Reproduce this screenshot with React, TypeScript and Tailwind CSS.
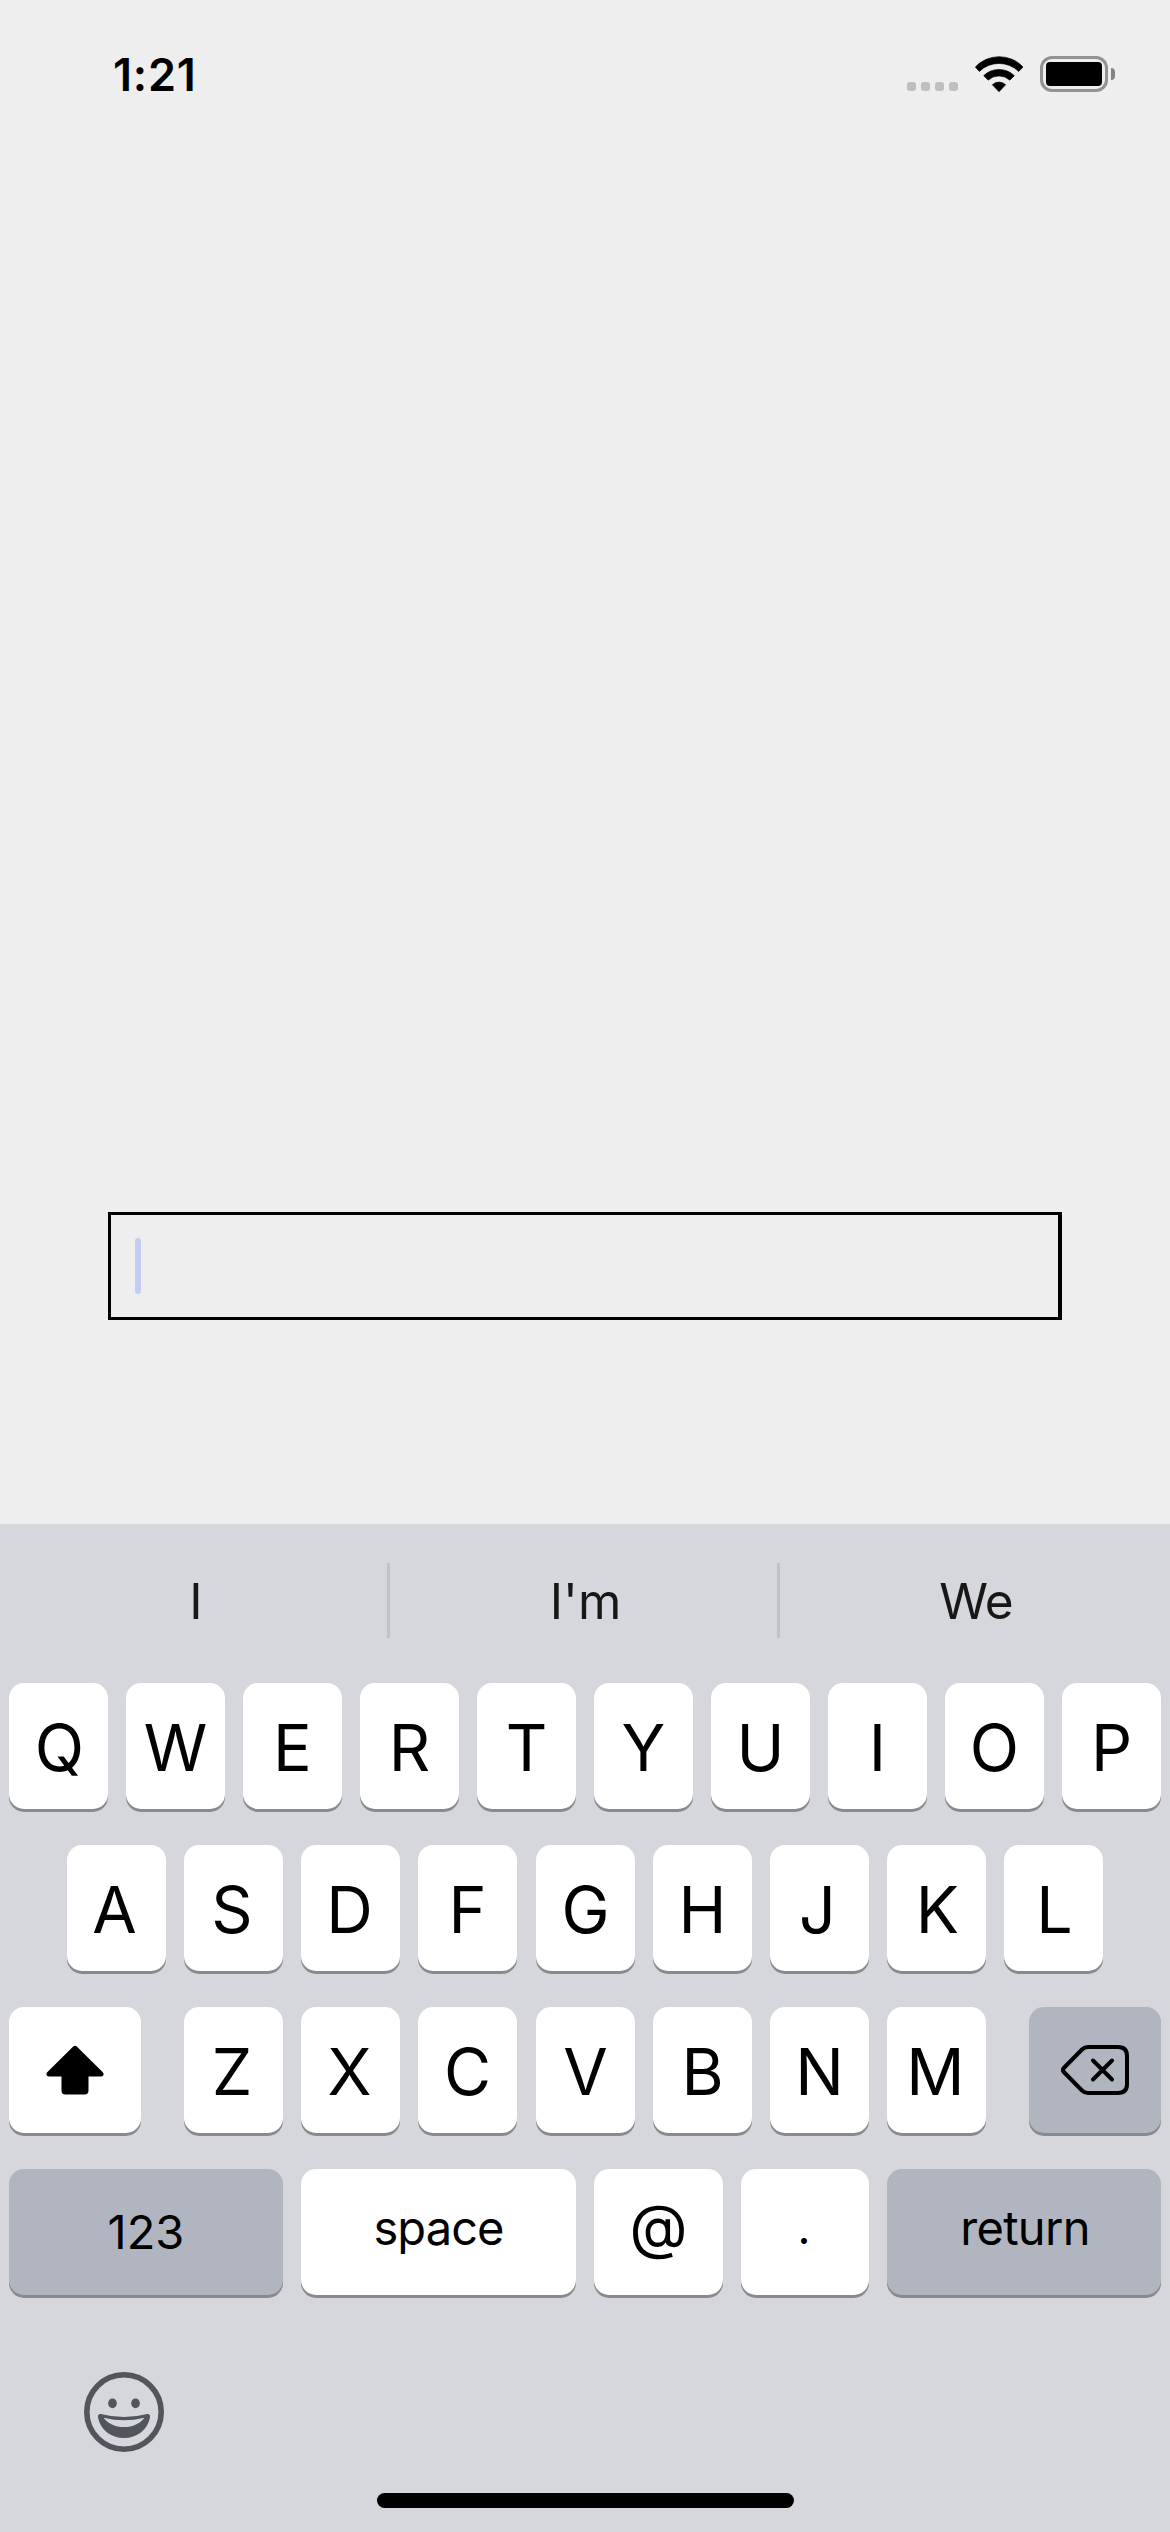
import type { ReactNode } from "react";

const ROW_1 = ["Q", "W", "E", "R", "T", "Y", "U", "I", "O", "P"];
const ROW_2 = ["A", "S", "D", "F", "G", "H", "J", "K", "L"];
const ROW_3 = ["Z", "X", "C", "V", "B", "N", "M"];

// Optical nudges for individual letters inside their key caps.
const NUDGE: Record<string, string> = {
  A: "pr-1",
  S: "pr-[3px]",
  D: "pr-0.5",
  J: "pr-1",
  Z: "pr-[3px]",
  X: "pr-0.5",
  Q: "pl-0.5",
  K: "pl-0.5",
  L: "pl-0.5",
  M: "pr-0.5",
};

function Key({ className, children }: { className: string; children: ReactNode }) {
  return (
    <button
      type="button"
      className={`flex h-[126px] shrink-0 items-center justify-center rounded-[15px] leading-none text-black shadow-[0_3px_0_#898a8d] ${className}`}
    >
      {children}
    </button>
  );
}

function LetterKeys({ letters }: { letters: string[] }) {
  return (
    <div className="flex gap-[18px]">
      {letters.map((l) => (
        <Key
          key={l}
          className={`w-[99px] bg-white pt-[5px] text-[64.5px] ${l === "G" || l === "V" ? "ml-px" : ""} ${NUDGE[l] ?? ""}`}
        >
          {l}
        </Key>
      ))}
    </div>
  );
}

function StatusBar() {
  return (
    <header className="flex h-[150px] items-start justify-between pr-[55px] pl-[113px]">
      <div className="mt-[52px] text-[45px] leading-[45px] font-semibold tracking-[0.8px] text-black">1:21</div>
      <div className="mt-[55px] flex items-start">
        <div className="mt-[27px] flex gap-[5px]">
          {[0, 1, 2, 3].map((i) => (
            <span key={i} className="size-[9px] rounded-[3px] bg-[#bfbfbf]" />
          ))}
        </div>
        <svg
          className="ml-4 h-[38px] w-[50px]"
          viewBox="282 72 150 114"
          fill="#000"
          stroke="#000"
          strokeWidth="2"
          strokeLinejoin="round"
        >
          <path d="M286 108A98 98 0 0 1 429 108L416 121.500A84 84 0 0 0 298 121.500Z" />
          <path d="M311 134A66 66 0 0 1 403 134L389.500 147.500A48 48 0 0 0 324.500 147.500Z" />
          <path d="M337 161A30 30 0 0 1 377 161L357 182Z" />
        </svg>
        <div className="mt-px ml-4 flex h-9 w-[68px] items-center justify-center rounded-[12px] border-3 border-[#929292]">
          <div className="h-6 w-14 rounded-[4px] bg-black" />
        </div>
        <div className="mt-[13px] ml-[3px] h-3 w-1 rounded-r-full bg-[#838383]" />
      </div>
    </header>
  );
}

export default function App() {
  return (
    <div className="flex h-[2532px] w-[1170px] flex-col overflow-hidden bg-[#eeeeee] font-['Inter',sans-serif]">
      <StatusBar />
      <main className="flex-1 px-[108px] pt-[1062px]">
        <div className="flex h-[108px] items-start border-3 border-r-4 border-black pt-[23px] pl-6">
          <span className="h-14 w-1.5 rounded-full bg-[#c3cdf1]" />
        </div>
      </main>
      <section className="h-[1008px] bg-[#d6d7dc] px-[9px] pt-[39px]">
        <div className="-mx-[9px] flex h-[75px] items-center text-[49.5px] leading-none text-[#171717]">
          <div className="w-[387px] pt-0.5 pl-[5px] text-center">I</div>
          <div className="h-full w-[3px] bg-[#c1c2c7]" />
          <div className="w-[387px] pt-0.5 pl-1 text-center">I'm</div>
          <div className="h-full w-[3px] bg-[#c1c2c7]" />
          <div className="w-[390px] pt-0.5 pl-0.5 text-center tracking-[-0.8px]">We</div>
        </div>
        <div className="mt-[45px] flex flex-col gap-9">
          <LetterKeys letters={ROW_1} />
          <div className="pl-[58px]">
            <LetterKeys letters={ROW_2} />
          </div>
          <div className="flex justify-between">
            <Key className="w-[132px] bg-white">
              <svg className="h-[50px] w-[58px]" viewBox="0 0 58 50" fill="#000">
                <path d="M27.500 1.300Q29 0 30.500 1.300L56.800 27.300Q58.300 29.200 57 30.800Q56.500 31.500 55 31.500H42.500V45.500Q42.500 49.500 38.500 49.500H19.500Q15.500 49.500 15.500 45.500V31.500H3Q1.500 31.500 1 30.800Q-.3 29.200 1.200 27.300Z" />
              </svg>
            </Key>
            <LetterKeys letters={ROW_3} />
            <Key className="w-[132px] bg-[#b1b5c0]">
              <svg
                className="h-[50px] w-[68px]"
                viewBox="0 0 68 50"
                fill="none"
                stroke="#000"
                strokeWidth="4"
                strokeLinecap="round"
                strokeLinejoin="round"
              >
                <path d="M27 2H57Q66 2 66 11V39Q66 48 57 48H27Q23.500 48 21 45.500L2.800 27Q1 25 2.800 23L21 4.500Q23.500 2 27 2Z" />
                <path d="M32 15.500L51 34.500M51 15.500L32 34.500" />
              </svg>
            </Key>
          </div>
          <div className="flex justify-between">
            <Key className="w-[274px] bg-[#b1b5c0] pb-0.5 text-[47px]">123</Key>
            <Key className="w-[275px] bg-white pb-2.5 text-[47px] tracking-[-0.9px]">space</Key>
            <Key className="w-[129px] bg-white pb-3 text-[60px]">@</Key>
            <Key className="w-[128px] bg-white pr-0.5 pb-2.5 text-[45px]">.</Key>
            <Key className="w-[274px] bg-[#b1b5c0] pb-2.5 pl-0.5 text-[47px] tracking-[-0.7px]">return</Key>
          </div>
        </div>
        <div className="mt-[77px] ml-[75px]">
          <svg className="size-20" viewBox="0 0 80 80" fill="#50565c">
            <circle cx="40" cy="40" r="37.200" fill="none" stroke="#50565c" strokeWidth="5.600" />
            <ellipse cx="28.500" cy="31.300" rx="4.300" ry="4.900" />
            <ellipse cx="51.500" cy="31.300" rx="4.300" ry="4.900" />
            <path
              fillRule="evenodd"
              d="M17 42Q28 45 40 45Q52 45 63 42Q66.500 41.500 66 45.500C63.500 58 53 66 40 66S16.500 58 14 45.500Q13.500 41.500 17 42ZM19.500 45.700C24 51.500 31 55 40 55S56 51.500 60.500 45.700Q50 48.200 40 48.200T19.500 45.700Z"
            />
          </svg>
        </div>
        <div className="mx-auto mt-[41px] h-[15px] w-[417px] rounded-full bg-black" />
      </section>
    </div>
  );
}
